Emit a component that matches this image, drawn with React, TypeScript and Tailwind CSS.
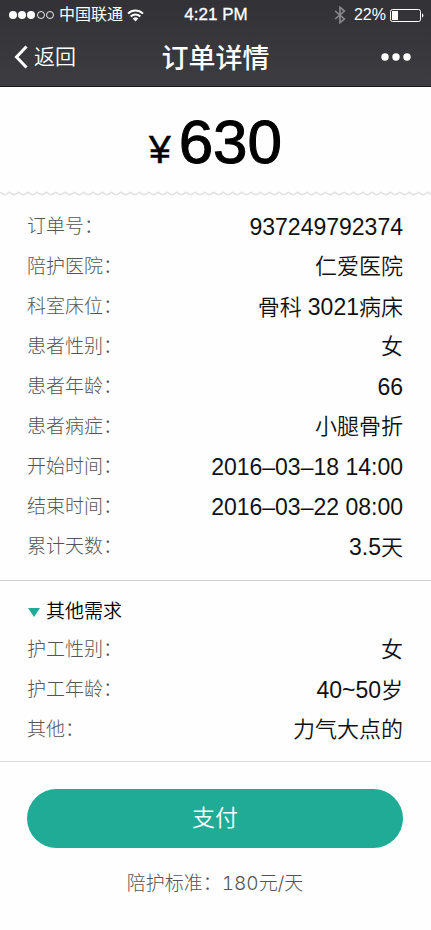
import React from "react";

const ORDER_ROWS = [
  { label: "订单号", value: "937249792374" },
  { label: "陪护医院", value: "仁爱医院" },
  { label: "科室床位", value: "骨科 3021病床" },
  { label: "患者性别", value: "女" },
  { label: "患者年龄", value: "66" },
  { label: "患者病症", value: "小腿骨折" },
  { label: "开始时间", value: "2016–03–18 14:00" },
  { label: "结束时间", value: "2016–03–22 08:00" },
  { label: "累计天数", value: "3.5天" },
];

const EXTRA_ROWS = [
  { label: "护工性别", value: "女" },
  { label: "护工年龄", value: "40~50岁" },
  { label: "其他", value: "力气大点的" },
];

function SignalDots() {
  return (
    <svg viewBox="0 0 47 10" className="h-[10px] w-[47px]" aria-hidden="true">
      {[5, 14, 23].map((x) => (
        <circle key={x} cx={x} cy="5" r="4" fill="white" />
      ))}
      {[33, 42].map((x) => (
        <circle key={x} cx={x} cy="5" r="3.5" fill="none" stroke="white" strokeWidth="0.9" />
      ))}
    </svg>
  );
}

function WifiIcon() {
  return (
    <svg viewBox="0 0 17 13" className="h-[13px] w-[17px]" fill="none" stroke="white" strokeWidth="2" aria-hidden="true">
      <path d="M1 4.6a10.6 10.6 0 0 1 15 0" />
      <path d="M3.7 7.5a6.8 6.8 0 0 1 9.6 0" />
      <path d="M8.5 12.4 5.7 9.5a4 4 0 0 1 5.6 0Z" fill="white" stroke="none" />
    </svg>
  );
}

function BluetoothIcon() {
  return (
    <svg viewBox="0 0 12 18" className="h-[18px] w-3" fill="none" stroke="#8b8b8f" strokeWidth="1.6" aria-hidden="true">
      <path d="M1.2 5 10.4 13 6 16.7V1.3L10.4 5 1.2 13" />
    </svg>
  );
}

function BatteryIcon() {
  return (
    <svg viewBox="0 0 34 13" className="h-[13px] w-[34px]" aria-hidden="true">
      <rect x="0.5" y="0.5" width="30" height="12" rx="2" fill="none" stroke="white" />
      <rect x="2" y="2" width="6" height="9" fill="white" />
      <path d="M32 4.2a2.6 2.6 0 0 1 0 4.6Z" fill="white" />
    </svg>
  );
}

// Torn ticket edge under the amount
function ScallopEdge() {
  return (
    <svg className="block h-[5px] w-full" aria-hidden="true">
      <defs>
        <pattern id="scallop" width="9.3" height="5" patternUnits="userSpaceOnUse">
          <path d="M0 1Q4.65 6.4 9.3 1" fill="none" stroke="#e0e0e0" strokeWidth="1.4" />
        </pattern>
      </defs>
      <rect width="100%" height="5" fill="url(#scallop)" />
    </svg>
  );
}

function Value({ text }: { text: string }) {
  // digits are set slightly larger than the hanzi around them
  return (
    <>
      {text.split(/([\d.:~–]+(?: [\d:]+)?)/).map((part, i) =>
        i % 2 ? <span key={i} className="text-[23px]">{part}</span> : part
      )}
    </>
  );
}

function Rows({ rows }: { rows: { label: string; value: string }[] }) {
  return (
    <dl>
      {rows.map((row) => (
        <div key={row.label} className="flex h-10 items-center justify-between">
          <dt className="text-[19px] font-light text-[#555]">{row.label}：</dt>
          <dd className="text-[22px] leading-10 font-[350] text-[#111]">
            <Value text={row.value} />
          </dd>
        </div>
      ))}
    </dl>
  );
}

export default function App() {
  return (
    <div className="min-h-screen bg-[#fefefe] font-['Liberation_Sans','Noto_Sans_CJK_SC',sans-serif]">
      <header className="border-b border-[#18181a] bg-linear-to-b from-[#323236] to-[#3c3c41] text-white">
        <div className="grid h-7 grid-cols-[1fr_auto_1fr] items-center pt-0.5 pr-[7px] pl-2">
          <div className="flex items-center gap-1 text-base">
            <SignalDots />
            <span>中国联通</span>
            <WifiIcon />
          </div>
          <span className="text-[17px] [-webkit-text-stroke:0.3px]">4:21 PM</span>
          <div className="flex items-center justify-end gap-1">
            <BluetoothIcon />
            <span className="ml-1 text-base">22%</span>
            <BatteryIcon />
          </div>
        </div>
        <div className="grid h-[58px] grid-cols-[1fr_auto_1fr] items-center px-3.5">
          <button type="button" className="flex items-center gap-1.5 text-[21px] font-[350]">
            <svg viewBox="0 0 14 24" className="h-6 w-3.5" fill="none" stroke="white" strokeWidth="3" aria-hidden="true">
              <path d="M12.5 1.5 2.5 12l10 10.5" />
            </svg>
            返回
          </button>
          <h1 className="pt-1 text-[27px] font-medium">订单详情</h1>
          <button type="button" aria-label="更多" className="mr-1.5 justify-self-end">
            <svg viewBox="0 0 30 8" className="h-2 w-[30px]" fill="white">
              <circle cx="4" cy="4" r="3.7" />
              <circle cx="15" cy="4" r="3.7" />
              <circle cx="26" cy="4" r="3.7" />
            </svg>
          </button>
        </div>
      </header>

      <main>
        <p className="flex h-26 items-baseline justify-center gap-2 pt-2 text-black">
          <span className="text-[39px] [-webkit-text-stroke:0.5px]">¥</span>
          <span className="text-[62px] [-webkit-text-stroke:1px]">630</span>
        </p>
        <ScallopEdge />

        <section className="border-b border-[#cfcfcf] pt-[11px] pr-7 pb-[13px] pl-[27px]">
          <Rows rows={ORDER_ROWS} />
        </section>

        <section className="border-b border-[#dcdcdc] pt-3.5 pr-7 pb-[11px] pl-[27px]">
          <button type="button" className="flex h-[35px] items-center gap-1.5 text-[19px] font-[350] text-black">
            <svg viewBox="0 0 13 9" className="h-[9px] w-[13px]" aria-hidden="true">
              <path d="M1 0h12L7 9Z" fill="#1fab96" />
            </svg>
            其他需求
          </button>
          <Rows rows={EXTRA_ROWS} />
        </section>

        <div className="pt-[27px] pr-7 pb-6 pl-[27px] text-center">
          <button type="button" className="h-[59px] w-full rounded-full bg-[#1fab96] text-[23px] font-[350] text-white">
            支付
          </button>
          <p className="mt-[22px] font-['Inter','Noto_Sans_CJK_SC',sans-serif] text-[19px] font-light text-[#555] tabular-nums">
            陪护标准：180元/天
          </p>
        </div>
      </main>
    </div>
  );
}
